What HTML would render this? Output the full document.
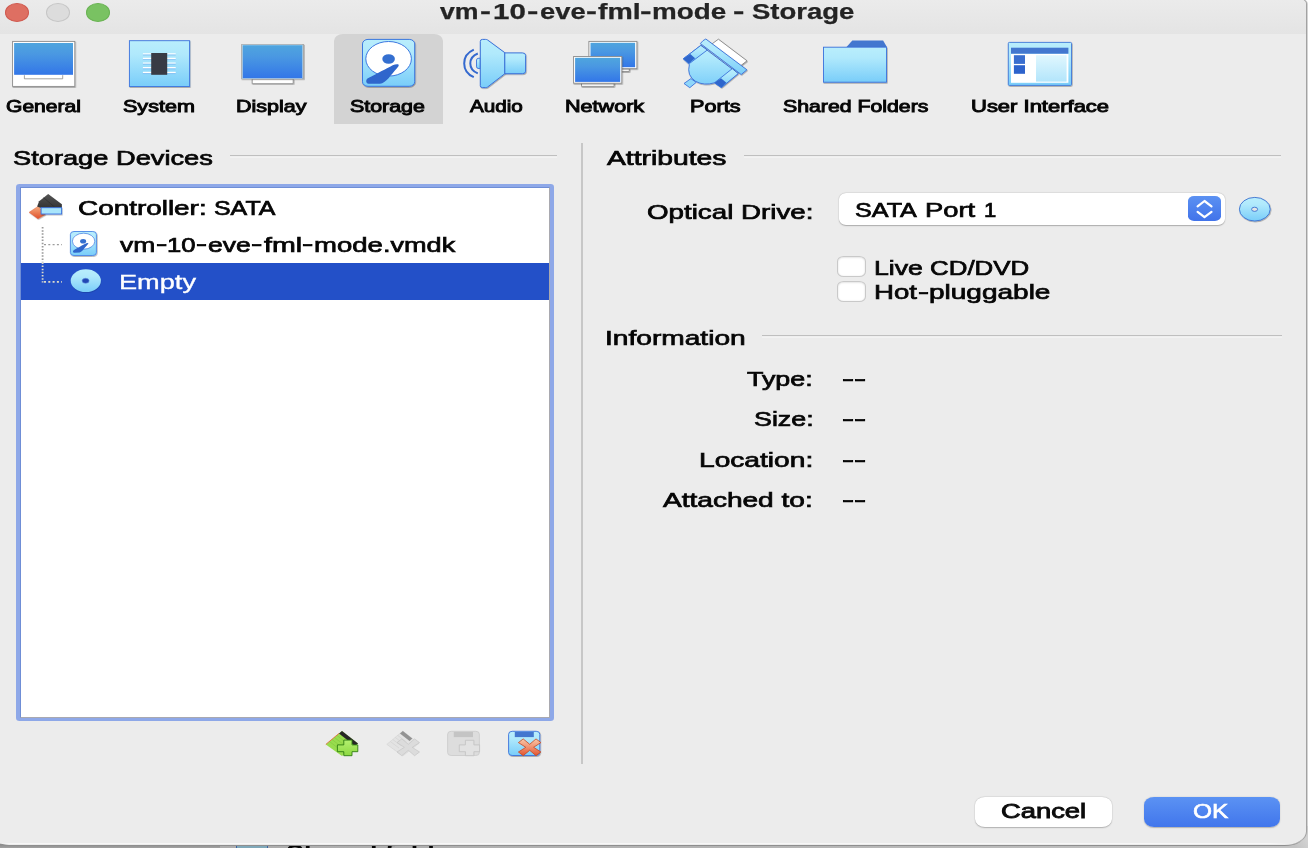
<!DOCTYPE html>
<html lang="en">
<head>
<meta charset="utf-8">
<title>vm-10-eve-fml-mode - Storage</title>
<style>
html,body{margin:0;padding:0;}
body{width:1312px;height:848px;overflow:hidden;background:#fff;position:relative;font-family:"Liberation Sans",sans-serif;}
.abs{position:absolute;}
#desk{position:absolute;left:0;top:826px;width:1307.7px;height:22px;background:linear-gradient(90deg,#adadad 220px,#b3b3b3 700px,#c3c3c3 1290px);overflow:hidden;}
#desk .dark{position:absolute;left:0;top:0;width:219.6px;height:22px;background:linear-gradient(#8c8c8c 18.7px,#a2a2a2 22px);}
#desk .ico{position:absolute;left:236.3px;top:18.9px;width:31.6px;height:6px;background:#7fa8b9;border-left:1.5px solid #3d62a2;border-right:1.5px solid #3d62a2;box-sizing:border-box;}
#desk .sf{position:absolute;left:286.2px;top:16px;font-size:21.8px;line-height:21.8px;font-weight:700;color:#050505;white-space:nowrap;transform-origin:0 0;transform:scaleX(1.24);filter:blur(0.4px);}
#desk .shade{position:absolute;left:1284px;top:4px;width:23.7px;height:18px;background:linear-gradient(60deg,#c3c3c3 35%,#d2d2d2 80%);}
#win{position:absolute;left:0;top:0;width:1312px;height:848px;}
#winbg{position:absolute;left:-11px;top:-1px;width:1316.9px;height:845.7px;background:#ececec;border-radius:0 6px 21.5px 20px / 0 5px 13.5px 15px;box-shadow:0.9px 0 0 #9d9d9d, 1.8px 0 0 #c9c9c9, 0 1.1px 0 #8f8f8f;}
#winhl{position:absolute;left:0;top:843.3px;width:1290px;height:1.2px;background:linear-gradient(90deg,#f7f7f700,#f7f7f7 12px,#f7f7f7 1270px,#f7f7f700);}
#titlebar{position:absolute;left:0;top:0;width:1305.9px;height:33.8px;background:linear-gradient(#ebebeb,#e4e4e4);border-radius:0 6px 0 0 / 0 4px 0 0;}
.tl{position:absolute;top:2.9px;width:24.4px;height:18.9px;border-radius:50%;box-sizing:border-box;}
.g{position:static;margin:0;padding:0;}
.t{position:absolute;white-space:nowrap;transform-origin:0 0;display:block;filter:blur(0.4px);}
.s{-webkit-text-stroke:0.7px currentColor;}
#sel{position:absolute;left:333.75px;top:34.3px;width:109.5px;height:89.5px;background:#d3d3d3;border-radius:9px 9px 0 0 / 7px 7px 0 0;}
.hl{position:absolute;height:1.5px;background:#bfbfbf;box-shadow:0 1.7px 0 #f6f6f6;}
#vsep{position:absolute;left:580.5px;top:143px;width:2px;height:620.8px;background:#c7c7c7;filter:blur(0.45px);}
#list{position:absolute;left:15.9px;top:183.8px;width:538px;height:537.1px;background:#8ea8e8;border-radius:3.5px / 3px;}
#listin{position:absolute;left:20.1px;top:187.05px;width:530.1px;height:531.35px;background:#fff;box-sizing:border-box;border-style:solid;border-width:0.95px 0.9px 0.9px 1.1px;border-color:#6f8ed6 #a9a9b0 #a9a9b0 #6f8ed6;}
#rowsel{position:absolute;left:21.2px;top:262.7px;width:528.1px;height:37.3px;background:#2350c8;}
#combo{position:absolute;left:838.8px;top:193.2px;width:386.5px;height:31.6px;background:#fff;border-radius:7px / 6px;box-shadow:0 0.3px 1.2px rgba(0,0,0,.26),0 0 0 0.5px rgba(0,0,0,.05);}
#step{position:absolute;left:1188.2px;top:196.2px;width:32.7px;height:24.8px;border-radius:6px / 4.8px;background:linear-gradient(#5b91f2,#4173ea);}
.cb{position:absolute;left:837px;width:28.8px;height:21.3px;background:#fff;border-radius:6.5px / 5.2px;box-sizing:border-box;border:1px solid #c9c9c9;box-shadow:inset 0 0.5px 2px rgba(0,0,0,.16);}
.btn{position:absolute;top:796.7px;height:30.5px;border-radius:10px / 8px;}
#cancel{left:974.8px;width:136.8px;background:#fff;box-shadow:0 0.4px 1.3px rgba(0,0,0,.24),0 0 0 0.5px rgba(0,0,0,.05);}
#ok{left:1143.8px;width:136px;background:linear-gradient(#5b92f3,#4176ec);box-shadow:0 0.6px 1.2px rgba(0,0,0,.25);}
svg{position:absolute;left:0;top:0;overflow:visible;filter:blur(0.35px);}
</style>
</head>
<body>
<div id="desk">
  <div class="dark"></div>
  <div class="ico"></div>
  <div class="sf">Shared folders</div>
  <div class="shade"></div>
</div>
<div id="win">
  <div id="winbg"></div>
  <div id="winhl"></div>
  <div id="titlebar"></div>
  <div class="tl" style="left:5.1px;background:#de6f62;border:1px solid #cf5a50;"></div>
  <div class="tl" style="left:45.7px;background:#dcdcdc;border:1px solid #c6c6c6;"></div>
  <div class="tl" style="left:86.1px;background:#79c262;border:1px solid #6ab354;"></div>
  <div id="sel"></div>

  <div class="hl" style="left:230px;top:154.6px;width:327px;"></div>
  <div class="hl" style="left:743.8px;top:154.6px;width:537.7px;"></div>
  <div class="hl" style="left:762px;top:334.6px;width:519.5px;"></div>
  <div id="vsep"></div>

  <div id="list"></div>
  <div id="listin"></div>
  <div id="rowsel"></div>

  <div id="combo"></div>
  <div id="step"></div>
  <div class="cb" style="top:256.2px;"></div>
  <div class="cb" style="top:281.2px;"></div>

  <div class="btn" id="cancel"></div>
  <div class="btn" id="ok"></div>

<svg width="1312" height="848" viewBox="0 0 1312 848">
<defs>
  <linearGradient id="gScreen" x1="0" y1="0" x2="0" y2="1"><stop offset="0" stop-color="#4fa5de"/><stop offset="0.35" stop-color="#4a98e2"/><stop offset="1" stop-color="#3276e8"/></linearGradient>
  <linearGradient id="gLight" x1="0" y1="0" x2="0" y2="1"><stop offset="0" stop-color="#b9eefc"/><stop offset="0.3" stop-color="#b0e9fc"/><stop offset="1" stop-color="#79cdf9"/></linearGradient>
  <linearGradient id="gPanel" x1="0" y1="0" x2="0" y2="1"><stop offset="0" stop-color="#e0f7fe"/><stop offset="1" stop-color="#b3e5fb"/></linearGradient>
  <linearGradient id="gOrange" x1="0" y1="0" x2="0" y2="1"><stop offset="0" stop-color="#f5ae80"/><stop offset="1" stop-color="#e0502a"/></linearGradient>
  <linearGradient id="gRedX" x1="0" y1="0" x2="0" y2="1"><stop offset="0" stop-color="#f8c8a8"/><stop offset="0.5" stop-color="#f09070"/><stop offset="1" stop-color="#e2542e"/></linearGradient>
  <linearGradient id="gGreen" x1="0" y1="0" x2="0" y2="1"><stop offset="0" stop-color="#b4f070"/><stop offset="1" stop-color="#8cd840"/></linearGradient>
  <linearGradient id="gDark" x1="0" y1="0" x2="0" y2="1"><stop offset="0" stop-color="#555"/><stop offset="1" stop-color="#333"/></linearGradient>
  <filter id="sh" x="-10%" y="-10%" width="125%" height="130%"><feDropShadow dx="0.6" dy="0.8" stdDeviation="0.5" flood-color="#000" flood-opacity="0.35"/></filter>
</defs>

<!-- General -->
<g id="ic-general">
  <rect x="12.6" y="41.4" width="62.2" height="45" fill="#fff" stroke="#8c8c8c" stroke-width="0.9" filter="url(#sh)"/>
  <rect x="14.1" y="43" width="58.9" height="31.8" fill="url(#gScreen)"/>
  <path d="M24.4 75.2 V78.8 H62.7 V75.2" fill="#fff" stroke="#8c8c8c" stroke-width="0.8"/>
</g>

<!-- System -->
<g id="ic-system">
  <rect x="129.4" y="40.7" width="60.2" height="45.8" fill="url(#gLight)" stroke="#3b74de" stroke-width="0.9" filter="url(#sh)"/>
  <g stroke="#fff" stroke-width="1.4">
    <path d="M142.9 53.9H175.7M142.9 58.5H175.7M142.9 63.1H175.7M142.9 67.7H175.7M142.9 72.5H175.7"/>
  </g>
  <g stroke="#6aa8ee" stroke-width="0.7" opacity="0.8">
    <path d="M142.9 55H175.7M142.9 59.6H175.7M142.9 64.2H175.7M142.9 68.8H175.7M142.9 73.6H175.7"/>
  </g>
  <rect x="151.2" y="53" width="16" height="21.8" fill="#383b45"/>
</g>

<!-- Display -->
<g id="ic-display">
  <path d="M252.2 79 H293.2 V83.7 H252.2 Z" fill="#fff" stroke="#8e8e8e" stroke-width="0.9" filter="url(#sh)"/>
  <rect x="241.2" y="44" width="62.8" height="35.2" fill="#a9a9a9" filter="url(#sh)"/>
  <rect x="242.6" y="45" width="60" height="33.4" fill="url(#gScreen)"/>
  <rect x="242.6" y="45" width="60" height="33.4" fill="none" stroke="#bfe4fa" stroke-width="0.5"/>
</g>

<!-- Storage -->
<g id="ic-storage">
  <rect x="362.5" y="39.4" width="52.2" height="46.9" rx="5.5" ry="4.5" fill="url(#gLight)" stroke="#3b78e0" stroke-width="1" filter="url(#sh)"/>
  <ellipse cx="388.6" cy="58.8" rx="22.8" ry="17.3" fill="#fff" stroke="#3b78e0" stroke-width="1"/>
  <ellipse cx="388.6" cy="59" rx="6.3" ry="4.8" fill="#346fd0"/>
  <path d="M397.9 64.2 C395 63.8 392 65.5 387 68.2 C380 72 372 76 367.5 78.6 C365.6 80 365.8 83.6 368.5 83.8 L380 83.7 C383 83.5 385.5 81.5 388.8 78 C392 74 396.5 69 398.3 66.6 C399 65.4 398.8 64.4 397.9 64.2 Z" fill="#2f66cc"/>
</g>

<!-- Audio -->
<g id="ic-audio">
  <path d="M480.3 58.2 H479 Q476.5 58.2 476.5 60 V66.8 Q476.5 68.6 479 68.6 H480.3 Z" fill="url(#gLight)" stroke="#3b72da" stroke-width="0.9"/>
  <path d="M482.4 39.4 H485.5 Q486.8 39.4 487.6 40 L504.8 52.7 V73.7 L487.6 87 Q486.8 87.6 485.5 87.6 H482.4 Q480.3 87.6 480.3 85.6 V41.4 Q480.3 39.4 482.4 39.4 Z" fill="url(#gLight)" stroke="#3b72da" stroke-width="1" filter="url(#sh)"/>
  <path d="M504.8 52.9 H522.4 Q525.6 52.9 525.6 55.4 V71.2 Q525.6 73.7 522.4 73.7 H504.8 Z" fill="url(#gLight)" stroke="#3b72da" stroke-width="1" filter="url(#sh)"/>
  <path d="M473.8 49.7 Q464.2 54 464.2 63.4 Q464.2 72.8 473.8 77.2" fill="none" stroke="#3469cf" stroke-width="2"/>
  <path d="M477.8 53.5 Q470.3 56.5 470.3 63.4 Q470.3 70.3 477.8 73.4" fill="none" stroke="#3469cf" stroke-width="2"/>
</g>

<!-- Network -->
<g id="ic-network">
  <g>
    <path d="M596 68.7 H629.3 V71.5 H596 Z" fill="#fff" stroke="#8e8e8e" stroke-width="0.9" filter="url(#sh)"/>
    <rect x="588.9" y="41.4" width="48" height="27.3" fill="#fff" stroke="#8c8c8c" stroke-width="0.9" filter="url(#sh)"/>
    <rect x="590.5" y="42.8" width="44.6" height="24.4" fill="url(#gScreen)"/>
  </g>
  <g>
    <path d="M581.5 83 H614.1 V86.4 H581.5 Z" fill="#fff" stroke="#8e8e8e" stroke-width="0.9" filter="url(#sh)"/>
    <rect x="573.6" y="56.5" width="48.2" height="26.7" fill="#fff" stroke="#8c8c8c" stroke-width="0.9" filter="url(#sh)"/>
    <rect x="575.1" y="57.8" width="45.1" height="24.1" fill="url(#gScreen)"/>
  </g>
</g>

<!-- Ports -->
<g id="ic-ports">
  <path d="M718.4 39.2 L747 60.8 L739 67 L710.5 45 Z" fill="#fff" stroke="#7a7a7a" stroke-width="0.8" filter="url(#sh)"/>
  <!-- body -->
  <path d="M700.8 45.4 L738.2 73.6 L721.4 87.4 L714.5 82.8 Q704 86 695.5 81.3 Q686.5 75.5 689.4 64.5 L683.3 58.8 Z" fill="url(#gLight)" stroke="#3b72da" stroke-width="0.9" filter="url(#sh)"/>
  <!-- upper-left strap -->
  <path d="M683.3 58.8 L700.8 45.4 L707.3 50 L689.6 63.4 Z" fill="url(#gLight)" stroke="#3b72da" stroke-width="0.9"/>
  <path d="M683.3 58.8 L690.2 54 L695.1 58.2 L689 63.4 Z" fill="#2f66cc"/>
  <!-- lower-right strap -->
  <path d="M714.5 82.8 L732.3 68.6 L738.2 73.6 L721.4 87.6 Z" fill="url(#gLight)" stroke="#3b72da" stroke-width="0.9"/>
  <path d="M714.5 82.8 L721 78.2 L726.4 82.8 L721.4 87.6 Z" fill="#2f66cc"/>
  <!-- bottom-left pin -->
  <path d="M684 83.5 L690.9 78.6 L696.2 82.4 L689.8 87.7 Z" fill="#8fd6fa" stroke="#3b72da" stroke-width="0.9"/>
  <!-- flange -->
  <path d="M705.8 39 L746.9 69.8 L741.2 74.5 L700.4 43.5 Q703 40 705.8 39 Z" fill="url(#gLight)" stroke="#3b72da" stroke-width="0.9" filter="url(#sh)"/>
</g>

<!-- Shared Folders -->
<g id="ic-folder">
  <path d="M846.5 47 L852.3 40.5 H883.1 L886.9 47 Z" fill="#4377cf"/>
  <rect x="823.5" y="47.2" width="63" height="35" fill="url(#gLight)" stroke="#3b72dc" stroke-width="0.9" filter="url(#sh)"/>
</g>

<!-- User Interface -->
<g id="ic-ui">
  <rect x="1008.3" y="42.4" width="63.2" height="43" rx="1" fill="url(#gLight)" stroke="#3f78d8" stroke-width="0.9" filter="url(#sh)"/>
  <rect x="1011" y="54" width="57.4" height="28.8" fill="#fff"/>
  <rect x="1011" y="47.7" width="57.4" height="6" fill="#4377cf"/>
  <rect x="1013.9" y="55.2" width="11.1" height="8.7" fill="#396ecf"/>
  <rect x="1013.9" y="65.2" width="11.1" height="8.6" fill="#2d63cc"/>
  <rect x="1036" y="55.2" width="30.6" height="26.4" fill="url(#gPanel)"/>
</g>
</svg>

<svg width="1312" height="848" viewBox="0 0 1312 848">
<!-- tree lines -->
<g fill="none">
  <path d="M42.6 227 V262.4" stroke="#999" stroke-width="1.8" stroke-dasharray="1.5 1.65"/>
  <path d="M42.6 262.4 V282.4" stroke="#dcdacb" stroke-width="1.8" stroke-dasharray="1.5 1.65"/>
  <path d="M44 244.6 H62" stroke="#9d9d9d" stroke-width="1.4" stroke-dasharray="2 2.3"/>
  <path d="M44 281.9 H62" stroke="#dcdacb" stroke-width="1.6" stroke-dasharray="2 2.3"/>
</g>

<!-- controller icon -->
<g id="ic-ctl">
  <path d="M29.1 212.3 L38.3 206.2 L45.2 214.6 L37.9 218.8 Z" fill="url(#gOrange)" stroke="#d8512a" stroke-width="0.4" filter="url(#sh)"/>
  <path d="M48.2 194 L61.9 204.3 V208.1 H41 L37.1 206.6 L39.1 201.2 Z" fill="url(#gDark)"/>
  <path d="M43.5 197.6 L54.5 207" stroke="#2a2a2a" stroke-width="0.6" fill="none"/>
  <rect x="41.1" y="207.7" width="20.5" height="6.3" fill="#a9e5fb" stroke="#3a72e0" stroke-width="0.9" filter="url(#sh)"/>
</g>

<!-- small hdd icon -->
<g id="ic-hdd">
  <rect x="70.4" y="231.5" width="26" height="24" rx="3.6" ry="3" fill="url(#gLight)" stroke="#4b86e6" stroke-width="0.9" filter="url(#sh)"/>
  <ellipse cx="83.6" cy="241.2" rx="11.2" ry="8" fill="#fff" stroke="#3b78e0" stroke-width="0.7"/>
  <ellipse cx="83.1" cy="241.3" rx="3" ry="2.3" fill="#346fd0"/>
  <path d="M88 243 C86 243 83 245 79 247.2 C76 248.8 74 249.8 73.2 250.8 C72.6 252 73.2 252.9 74.4 252.8 L79.6 252.4 C81 252.2 82.4 250.8 84 248.8 C85.6 246.8 87.4 245 88.2 243.8 C88.5 243.3 88.4 243 88 243 Z" fill="#2f66cc"/>
</g>

<!-- cd icon in list -->
<g id="ic-cd">
  <ellipse cx="86.2" cy="281.6" rx="15.1" ry="11.4" fill="#1a3c9a" opacity="0.55"/>
  <ellipse cx="85.8" cy="280.7" rx="15.1" ry="11.4" fill="url(#gLight)"/>
  <ellipse cx="85.6" cy="280.8" rx="3.5" ry="2.5" fill="#2248b4" stroke="#5f8fe0" stroke-width="0.6"/>
</g>

<!-- combo chevrons -->
<g fill="none" stroke="#fff" stroke-width="2.2" stroke-linecap="round" stroke-linejoin="round">
  <path d="M1197.6 206.3 L1204.5 201 L1211.5 206.3"/>
  <path d="M1197.6 211.9 L1204.5 217.1 L1211.5 211.9"/>
</g>

<!-- cd button -->
<g id="ic-cdbtn">
  <ellipse cx="1254.8" cy="209.2" rx="15.4" ry="11.8" fill="url(#gLight)" stroke="#3a70d0" stroke-width="0.9" filter="url(#sh)"/>
  <ellipse cx="1254.6" cy="209.3" rx="3" ry="2.1" fill="#e4e4e4" stroke="#3a70d0" stroke-width="0.9"/>
</g>

<!-- add controller -->
<g id="ic-addctl">
  <path d="M342 731 L358 743.5 L342 755.9 L325.8 744.4 Z" fill="#98dc4e"/>
  <g stroke="#7cc238" stroke-width="0.5">
    <path d="M339.5 733.5 L355 745.5 M337 735.5 L352.5 747.5 M334.5 737.5 L350 749.5 M332 739.5 L347.5 751.5 M329.5 741.5 L345 753.5"/>
  </g>
  <path d="M342 731 L358 743.5 L355 745.9 L339 733.4 Z" fill="#262626"/>
  <path d="M339 733.4 L325.8 744.4" stroke="#e06030" stroke-width="0.8"/>
  <path d="M343.8 740.1 H352 V744.9 H357.8 V751.7 H352 V755.7 H343.8 V751.7 H337.4 V744.9 H343.8 Z" fill="url(#gGreen)" stroke="#2f7d12" stroke-width="0.9" stroke-linejoin="round"/>
</g>

<!-- remove controller (disabled) -->
<g id="ic-delctl">
  <path d="M402.8 731.1 L418.8 743.5 L402.8 755.9 L386.8 744.4 Z" fill="#e3e3e3" stroke="#cfcfcf" stroke-width="0.5"/>
  <g stroke="#cdcdcd" stroke-width="0.5">
    <path d="M400.3 733.5 L409 740 M397.8 735.5 L406.5 742 M395.3 737.5 L404 744 M392.8 739.5 L401.5 746 M390.3 741.5 L399 748"/>
  </g>
  <path d="M402.8 731.1 L412.3 738.5 L409.6 740.9 L400 733.4 Z" fill="#939393"/>
  <path d="M401.8 738.9 L408.3 744.3 L414.6 738.9 L419.5 742.6 L412.2 747.3 L419.5 752 L414.6 755.7 L408.3 750.3 L401.8 755.7 L397 752 L404.4 747.3 L397 742.6 Z" fill="#dcdcdc" stroke="#c6c6c6" stroke-width="0.7" stroke-linejoin="round"/>
</g>

<!-- add attachment (disabled) -->
<g id="ic-addatt">
  <rect x="447.6" y="731.3" width="31.8" height="24.2" rx="3.6" ry="3" fill="#dddddd" stroke="#cacaca" stroke-width="0.8"/>
  <rect x="453.8" y="731.9" width="19.2" height="5.2" fill="#c4c4c4"/>
  <path d="M465.4 740.3 H473.9 V744.9 H479.6 V751.7 H473.9 V755.7 H465.4 V751.7 H459.3 V744.9 H465.4 Z" fill="#e2e2e2" stroke="#c2c2c2" stroke-width="0.8" stroke-linejoin="round"/>
</g>

<!-- remove attachment -->
<g id="ic-delatt">
  <rect x="508.6" y="731.3" width="31.2" height="24.2" rx="3.6" ry="3" fill="url(#gLight)" stroke="#3a72dc" stroke-width="0.9" filter="url(#sh)"/>
  <rect x="514.8" y="731.9" width="19" height="5.2" fill="#4377cf"/>
  <path d="M523.2 738.9 L529.7 744.3 L536 738.9 L540.9 742.6 L533.6 747.3 L540.9 752 L536 755.7 L529.7 750.3 L523.2 755.7 L518.4 752 L525.8 747.3 L518.4 742.6 Z" fill="url(#gRedX)" stroke="#c8461e" stroke-width="0.8" stroke-linejoin="round"/>
</g>
</svg>


<div class="g" id="title"><span class="t" id="ti0" style="left:440.36px;top:2px;font-size:21.44px;line-height:21.44px;transform:scaleX(1.2444);color:#242424;font-weight:700;-webkit-text-stroke:0.25px currentColor">vm</span><span class="t" id="ti1" style="left:479.77px;top:1px;font-size:21.44px;line-height:21.44px;transform:scaleX(1.5304);color:#242424;font-weight:700;-webkit-text-stroke:0.25px currentColor">-</span><span class="t" id="ti2" style="left:493.09px;top:2px;font-size:21.44px;line-height:21.44px;transform:scaleX(1.3744);color:#242424;font-weight:700;-webkit-text-stroke:0.25px currentColor">10</span><span class="t" id="ti3" style="left:527.12px;top:1px;font-size:21.44px;line-height:21.44px;transform:scaleX(1.6000);color:#242424;font-weight:700;-webkit-text-stroke:0.25px currentColor">-</span><span class="t" id="ti4" style="left:539.74px;top:2px;font-size:21.44px;line-height:21.44px;transform:scaleX(1.2755);color:#242424;font-weight:700;-webkit-text-stroke:0.25px currentColor">eve</span><span class="t" id="ti5" style="left:586.07px;top:1px;font-size:21.44px;line-height:21.44px;transform:scaleX(1.5304);color:#242424;font-weight:700;-webkit-text-stroke:0.25px currentColor">-</span><span class="t" id="ti6" style="left:597.77px;top:2px;font-size:21.44px;line-height:21.44px;transform:scaleX(1.3278);color:#242424;font-weight:700;-webkit-text-stroke:0.25px currentColor">fml</span><span class="t" id="ti7" style="left:640.31px;top:1px;font-size:21.44px;line-height:21.44px;transform:scaleX(1.6174);color:#242424;font-weight:700;-webkit-text-stroke:0.25px currentColor">-</span><span class="t" id="ti8" style="left:651.95px;top:2px;font-size:21.44px;line-height:21.44px;transform:scaleX(1.2965);color:#242424;font-weight:700;-webkit-text-stroke:0.25px currentColor">mode</span> <span class="t" id="ti9" style="left:733.42px;top:1px;font-size:21.44px;line-height:21.44px;transform:scaleX(1.6000);color:#242424;font-weight:700;-webkit-text-stroke:0.25px currentColor">-</span> <span class="t" id="ti10" style="left:752.49px;top:2px;font-size:21.44px;line-height:21.44px;transform:scaleX(1.2826);color:#242424;font-weight:700;-webkit-text-stroke:0.25px currentColor">Storage</span></div>
<span class="t" id="tb1" style="left:5.79px;top:99px;font-size:15.99px;line-height:15.99px;transform:scaleX(1.3187);color:#060606;font-weight:400;-webkit-text-stroke:0.9px currentColor">General</span>
<span class="t" id="tb2" style="left:123.41px;top:99px;font-size:15.99px;line-height:15.99px;transform:scaleX(1.3480);color:#060606;font-weight:400;-webkit-text-stroke:0.9px currentColor">System</span>
<span class="t" id="tb3" style="left:236.36px;top:99px;font-size:15.99px;line-height:15.99px;transform:scaleX(1.3455);color:#060606;font-weight:400;-webkit-text-stroke:0.9px currentColor">Display</span>
<span class="t" id="tb4" style="left:350.42px;top:99px;font-size:15.99px;line-height:15.99px;transform:scaleX(1.3377);color:#060606;font-weight:400;-webkit-text-stroke:0.9px currentColor">Storage</span>
<span class="t" id="tb5" style="left:469.83px;top:99px;font-size:15.99px;line-height:15.99px;transform:scaleX(1.2925);color:#060606;font-weight:400;-webkit-text-stroke:0.9px currentColor">Audio</span>
<span class="t" id="tb6" style="left:565.10px;top:99px;font-size:15.99px;line-height:15.99px;transform:scaleX(1.3498);color:#060606;font-weight:400;-webkit-text-stroke:0.9px currentColor">Network</span>
<span class="t" id="tb7" style="left:689.60px;top:99px;font-size:15.99px;line-height:15.99px;transform:scaleX(1.3522);color:#060606;font-weight:400;-webkit-text-stroke:0.9px currentColor">Ports</span>
<span class="t" id="tb8" style="left:783.42px;top:99px;font-size:15.99px;line-height:15.99px;transform:scaleX(1.3301);color:#060606;font-weight:400;-webkit-text-stroke:0.9px currentColor">Shared Folders</span>
<span class="t" id="tb9" style="left:971.47px;top:99px;font-size:15.99px;line-height:15.99px;transform:scaleX(1.3756);color:#060606;font-weight:400;-webkit-text-stroke:0.9px currentColor">User Interface</span>
<span class="t" id="h1" style="left:13.01px;top:148px;font-size:20.2px;line-height:20.2px;transform:scaleX(1.3492);color:#060606;font-weight:400;-webkit-text-stroke:0.7px currentColor">Storage Devices</span>
<span class="t" id="h2" style="left:607.24px;top:148px;font-size:20.2px;line-height:20.2px;transform:scaleX(1.4005);color:#060606;font-weight:400;-webkit-text-stroke:0.7px currentColor">Attributes</span>
<span class="t" id="h3" style="left:604.73px;top:328px;font-size:20.2px;line-height:20.2px;transform:scaleX(1.3929);color:#060606;font-weight:400;-webkit-text-stroke:0.7px currentColor">Information</span>
<div class="g" id="row1"><span class="t" id="r1a" style="left:78.30px;top:198px;font-size:20.2px;line-height:20.2px;transform:scaleX(1.3814);color:#060606;font-weight:400;-webkit-text-stroke:0.7px currentColor">Controller:</span> <span class="t" id="r1b" style="left:214.32px;top:198px;font-size:20.2px;line-height:20.2px;transform:scaleX(1.2342);color:#060606;font-weight:400;-webkit-text-stroke:0.7px currentColor">SATA</span></div>
<div class="g" id="row2"><span class="t" id="r2_0" style="left:119.81px;top:235px;font-size:20.2px;line-height:20.2px;transform:scaleX(1.3099);color:#060606;font-weight:400;-webkit-text-stroke:0.7px currentColor">vm</span><span class="t" id="r2_1" style="left:155.74px;top:234px;font-size:20.2px;line-height:20.2px;transform:scaleX(1.6897);color:#060606;font-weight:400;-webkit-text-stroke:0.7px currentColor">-</span><span class="t" id="r2_2" style="left:166.64px;top:235px;font-size:20.2px;line-height:20.2px;transform:scaleX(1.2706);color:#060606;font-weight:400;-webkit-text-stroke:0.7px currentColor">10</span><span class="t" id="r2_3" style="left:195.96px;top:234px;font-size:20.2px;line-height:20.2px;transform:scaleX(1.6379);color:#060606;font-weight:400;-webkit-text-stroke:0.7px currentColor">-</span><span class="t" id="r2_4" style="left:208.01px;top:235px;font-size:20.2px;line-height:20.2px;transform:scaleX(1.3119);color:#060606;font-weight:400;-webkit-text-stroke:0.7px currentColor">eve</span><span class="t" id="r2_5" style="left:251.44px;top:234px;font-size:20.2px;line-height:20.2px;transform:scaleX(1.6897);color:#060606;font-weight:400;-webkit-text-stroke:0.7px currentColor">-</span><span class="t" id="r2_6" style="left:263.51px;top:235px;font-size:20.2px;line-height:20.2px;transform:scaleX(1.4155);color:#060606;font-weight:400;-webkit-text-stroke:0.7px currentColor">fml</span><span class="t" id="r2_7" style="left:302.44px;top:234px;font-size:20.2px;line-height:20.2px;transform:scaleX(1.6810);color:#060606;font-weight:400;-webkit-text-stroke:0.7px currentColor">-</span><span class="t" id="r2_8" style="left:314.21px;top:235px;font-size:20.2px;line-height:20.2px;transform:scaleX(1.3627);color:#060606;font-weight:400;-webkit-text-stroke:0.7px currentColor">mode</span><span class="t" id="r2_9" style="left:383.06px;top:235px;font-size:20.2px;line-height:20.2px;transform:scaleX(1.3409);color:#060606;font-weight:400;-webkit-text-stroke:0.7px currentColor">.vmdk</span></div>
<span class="t" id="r3" style="left:118.73px;top:272px;font-size:20.71px;line-height:20.71px;transform:scaleX(1.3116);color:#fff;font-weight:400;-webkit-text-stroke:0.35px currentColor">Empty</span>
<span class="t" id="od" style="left:646.74px;top:202px;font-size:20.2px;line-height:20.2px;transform:scaleX(1.3735);color:#060606;font-weight:400;-webkit-text-stroke:0.7px currentColor">Optical Drive:</span>
<div class="g" id="port"><span class="t" id="spa" style="left:855.32px;top:200px;font-size:20.2px;line-height:20.2px;transform:scaleX(1.2443);color:#060606;font-weight:400;-webkit-text-stroke:0.7px currentColor">SATA</span> <span class="t" id="spb" style="left:925.21px;top:200px;font-size:20.2px;line-height:20.2px;transform:scaleX(1.3543);color:#060606;font-weight:400;-webkit-text-stroke:0.7px currentColor">Port</span> <span class="t" id="spc" style="left:983.94px;top:200px;font-size:20.2px;line-height:20.2px;transform:scaleX(1.0947);color:#060606;font-weight:400;-webkit-text-stroke:0.7px currentColor">1</span></div>
<div class="g" id="chk1"><span class="t" id="c1a" style="left:873.85px;top:258px;font-size:20.2px;line-height:20.2px;transform:scaleX(1.3193);color:#060606;font-weight:400;-webkit-text-stroke:0.7px currentColor">Live</span> <span class="t" id="c1b" style="left:929.97px;top:258px;font-size:20.2px;line-height:20.2px;transform:scaleX(1.2826);color:#060606;font-weight:400;-webkit-text-stroke:0.7px currentColor">CD/DVD</span></div>
<div class="g" id="chk2"><span class="t" id="c2a" style="left:873.79px;top:282px;font-size:20.2px;line-height:20.2px;transform:scaleX(1.3674);color:#060606;font-weight:400;-webkit-text-stroke:0.7px currentColor">Hot</span><span class="t" id="c2b" style="left:918.46px;top:282px;font-size:20.2px;line-height:20.2px;transform:scaleX(1.6379);color:#060606;font-weight:400;-webkit-text-stroke:0.7px currentColor">-</span><span class="t" id="c2c" style="left:929.48px;top:282px;font-size:20.2px;line-height:20.2px;transform:scaleX(1.3866);color:#060606;font-weight:400;-webkit-text-stroke:0.7px currentColor">pluggable</span></div>
<span class="t" id="i1" style="left:747.43px;top:369px;font-size:20.2px;line-height:20.2px;transform:scaleX(1.3311);color:#060606;font-weight:400;-webkit-text-stroke:0.7px currentColor">Type:</span>
<span class="t" id="i2" style="left:753.52px;top:409px;font-size:20.2px;line-height:20.2px;transform:scaleX(1.3288);color:#060606;font-weight:400;-webkit-text-stroke:0.7px currentColor">Size:</span>
<span class="t" id="i3" style="left:699.01px;top:450px;font-size:20.2px;line-height:20.2px;transform:scaleX(1.3939);color:#060606;font-weight:400;-webkit-text-stroke:0.7px currentColor">Location:</span>
<span class="t" id="i4" style="left:663.49px;top:490px;font-size:20.2px;line-height:20.2px;transform:scaleX(1.3895);color:#060606;font-weight:400;-webkit-text-stroke:0.7px currentColor">Attached to:</span>
<span class="t" id="d1" style="left:841.69px;top:369px;font-size:20.2px;line-height:20.2px;transform:scaleX(1.7962);color:#060606;font-weight:400;-webkit-text-stroke:0.7px currentColor">--</span>
<span class="t" id="d2" style="left:841.69px;top:409px;font-size:20.2px;line-height:20.2px;transform:scaleX(1.7962);color:#060606;font-weight:400;-webkit-text-stroke:0.7px currentColor">--</span>
<span class="t" id="d3" style="left:841.69px;top:450px;font-size:20.2px;line-height:20.2px;transform:scaleX(1.7962);color:#060606;font-weight:400;-webkit-text-stroke:0.7px currentColor">--</span>
<span class="t" id="d4" style="left:841.69px;top:490px;font-size:20.2px;line-height:20.2px;transform:scaleX(1.7962);color:#060606;font-weight:400;-webkit-text-stroke:0.7px currentColor">--</span>
<span class="t" id="b1" style="left:1000.81px;top:801px;font-size:19.99px;line-height:19.99px;transform:scaleX(1.3677);color:#0c0c0c;font-weight:400;-webkit-text-stroke:0.85px currentColor">Cancel</span>
<span class="t" id="b2" style="left:1193.28px;top:801px;font-size:20.35px;line-height:20.35px;transform:scaleX(1.2030);color:#fff;font-weight:400;-webkit-text-stroke:0.6px currentColor">OK</span>
</div>
</body>
</html>
